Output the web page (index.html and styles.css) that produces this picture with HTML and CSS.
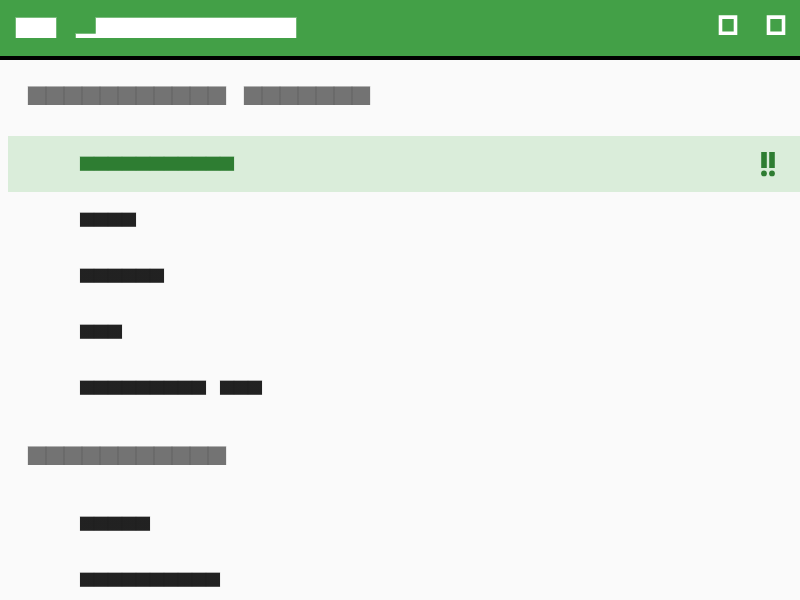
FILE: index.html
```
<!DOCTYPE html>
<html lang="en">
<head>
<meta charset="utf-8">
<title>List</title>
<link rel="stylesheet" href="styles.css">
</head>
<body>
<header class="app-bar">
  <span class="bar-glyph back"></span>
  <span class="title"><span class="bar-glyph underscore"></span><span class="bar-glyph name"></span></span>
  <span class="actions">
    <svg class="action" width="20" height="22" viewBox="0 0 20 22"><path fill="#fff" fill-rule="evenodd" d="M.7 1.2H19.3V21H.7ZM4.3 5V17.6H15.7V5Z"/></svg>
    <svg class="action" width="20" height="22" viewBox="0 0 20 22"><path fill="#fff" fill-rule="evenodd" d="M.7 1.2H19.3V21H.7ZM4.3 5V17.6H15.7V5Z"/></svg>
  </span>
</header>
<main>
  <h2 class="section"><span class="word"><i></i><i></i><i></i><i></i><i></i><i></i><i></i><i></i><i></i><i></i><i></i></span><span class="word"><i></i><i></i><i></i><i></i><i></i><i></i><i></i></span></h2>
  <ul class="list">
    <li class="row selected"><span class="word"><i></i><i></i><i></i><i></i><i></i><i></i><i></i><i></i><i></i><i></i><i></i></span>
      <svg class="priority" width="24" height="28" viewBox="0 0 24 28"><g fill="#2e7d32"><path d="M5.2 2H10.8V18H5.2ZM13.2 2H18.8V18H13.2Z"/><circle cx="8" cy="23.4" r="2.9"/><circle cx="16" cy="23.4" r="2.9"/></g></svg>
    </li>
    <li class="row"><span class="word"><i></i><i></i><i></i><i></i></span></li>
    <li class="row"><span class="word"><i></i><i></i><i></i><i></i><i></i><i></i></span></li>
    <li class="row"><span class="word"><i></i><i></i><i></i></span></li>
    <li class="row"><span class="word"><i></i><i></i><i></i><i></i><i></i><i></i><i></i><i></i><i></i></span><span class="word"><i></i><i></i><i></i></span></li>
  </ul>
  <h2 class="section"><span class="word"><i></i><i></i><i></i><i></i><i></i><i></i><i></i><i></i><i></i><i></i><i></i></span></h2>
  <ul class="list">
    <li class="row"><span class="word"><i></i><i></i><i></i><i></i><i></i></span></li>
    <li class="row"><span class="word"><i></i><i></i><i></i><i></i><i></i><i></i><i></i><i></i><i></i><i></i></span></li>
  </ul>
</main>
</body>
</html>
```
FILE: styles.css
```
* { box-sizing: border-box; }
body { margin: 0; height: 600px; overflow: hidden; background: #fafafa; font-family: Roboto, sans-serif; }

.app-bar {
  display: flex;
  height: 60px;
  padding: 0 14px 0 16px;
  background: #43a047;
  border-bottom: 4px solid #000;
}
.bar-glyph {
  display: block;
  background: linear-gradient(rgba(255,255,255,.3) 1px, #fff 1px);
  box-shadow: 1px 0 rgba(255,255,255,.25), -1px 0 rgba(255,255,255,.25);
}
.back { width: 40px; height: 21px; margin-top: 17px; }
.title { display: flex; align-items: flex-end; height: 21px; margin: 17px 0 0 20px; }
.underscore { width: 20px; height: 5px; }
.name { width: 200px; height: 21px; }
.actions { display: flex; gap: 28px; margin: 14px 0 0 auto; }
.action { display: block; }

.section { display: flex; gap: 18px; height: 80px; margin: 0; padding: 30px 0 0 28px; }
.section:first-child { height: 76px; padding-top: 26px; }
.list { margin: 0; padding: 0 0 0 8px; list-style: none; }
.row { display: flex; gap: 14px; height: 56px; padding: 20px 20px 0 72px; }
.selected { background: #daedda; }
.priority { display: block; margin: -6px 0 0 auto; }

.word { display: flex; }
.section i {
  width: 18px;
  height: 19px;
  background: linear-gradient(rgba(0,0,0,.29) 1px, rgba(0,0,0,.54) 1px);
  box-shadow: 1px 0 rgba(0,0,0,.07), -1px 0 rgba(0,0,0,.07);
}
.row i {
  width: 14px;
  height: 15px;
  background: linear-gradient(rgba(0,0,0,.3) 1px, rgba(0,0,0,.865) 1px 14px, rgba(0,0,0,.68) 14px);
  box-shadow: 1px 0 rgba(0,0,0,.04), -1px 0 rgba(0,0,0,.04);
}
.selected i {
  background: linear-gradient(rgba(46,125,50,.36) 1px, #2e7d32 1px 14px, rgba(46,125,50,.8) 14px);
  box-shadow: 1px 0 rgba(46,125,50,.08), -1px 0 rgba(46,125,50,.08);
}
```
